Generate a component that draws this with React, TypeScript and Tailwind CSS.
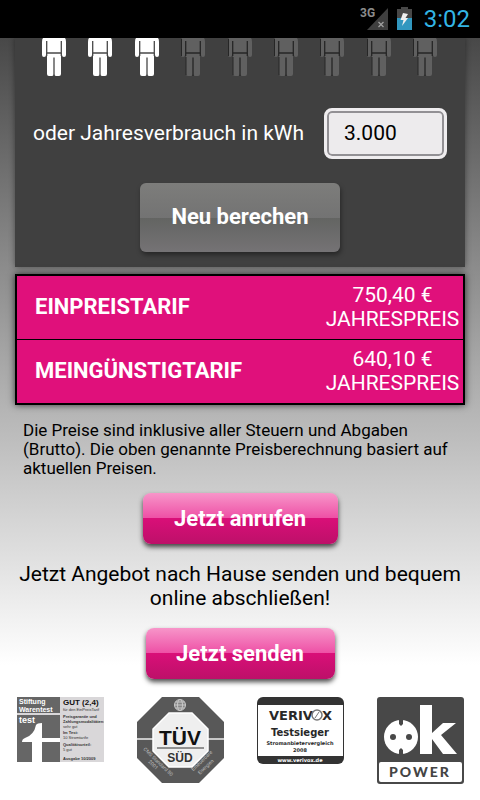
import React from "react";

function Person({ active }: { active: boolean }) {
  const fill = active ? "#ffffff" : "#606060";
  const line = active ? "#484848" : "#262626";
  return (
    <svg width="24" height="39" viewBox="0 0 24 39" aria-hidden="true">
      <path d="M1 0H23Q24 1 24 4V17Q24 19 22 19Q20 19 20 17V15H4V17Q4 19 2 19Q0 19 0 17V4Q0 1 1 0Z" fill={fill} />
      <path d="M5 15H19V36Q19 38 17 38H14Q12.5 38 12 36Q11.500 38 10 38H7Q5 38 5 36Z" fill={fill} />
      <path d="M4.700 3V18M19.300 3V18M5 15H19M12 19.500V38" stroke={line} strokeWidth="1.300" fill="none" />
      {!active && <path d="M0.500 1V18M5 19V37" stroke={line} strokeWidth="1" fill="none" />}
    </svg>
  );
}

function StatusBar() {
  return (
    <header className="flex h-[38px] items-center justify-end bg-black pr-[10px]">
      <svg width="28" height="26" viewBox="0 0 28 26" className="mr-2" role="img" aria-label="3G">
        <path d="M7 24L28 2V24Z" fill="#3f3f3f" />
        <path d="M18.500 16L23.500 21M23.500 16L18.500 21" stroke="#a0a0a0" strokeWidth="1.300" />
        <text x="0" y="11" fontFamily="Roboto, sans-serif" fontSize="12" fontWeight="700" fill="#8c8c8c">3G</text>
      </svg>
      <svg width="18" height="26" viewBox="0 0 18 26" className="mr-[10px]" aria-hidden="true">
        <path d="M1 3H5V1H12V3H16V24H1Z" fill="#484848" />
        <path d="M1 12H16V24H1Z" fill="#3197bf" />
        <path d="M7 7L12 8L9.500 12H12L6 20L7.500 14H4.500Z" fill="#f0f0f0" />
      </svg>
      <span className="text-2xl leading-[38px] text-[#33b5e5]">3:02</span>
    </header>
  );
}

function PinkButton({ children, wide }: { children: string; wide?: boolean }) {
  return (
    <button
      type="button"
      className={`mx-auto block h-[51px] rounded-lg bg-[linear-gradient(#f795c9,#ee4fa5_50%,#d90f78_50%,#bd1069)] text-[22px] leading-6 font-bold text-white shadow-[0_3px_5px_rgba(0,0,0,0.7)] ${wide ? "w-[195px]" : "w-[189px]"}`}
    >
      {children}
    </button>
  );
}

function TariffRow({ name, price }: { name: string; price: string }) {
  return (
    <tr className="h-16 border-b border-black last:h-[65px] last:border-b-0">
      <th scope="row" className="pl-[18px] text-left text-[22px] leading-6 font-bold">{name}</th>
      <td className="w-[142px] text-center text-[21px] leading-6">
        {price}
        <br />
        JAHRESPREIS
      </td>
    </tr>
  );
}

const sans = "Roboto, Arial, sans-serif";

function StiftungLogo() {
  return (
    <svg width="87" height="65" viewBox="0 0 87 65" role="img" aria-label="Stiftung Warentest">
      <rect width="87" height="65" fill="#d9d7d9" />
      <rect width="43" height="16" fill="#666" />
      <rect y="18" width="43" height="47" fill="#666" />
      <g fontFamily="Liberation Sans, Arial, sans-serif" fontWeight="700" fill="#fff">
        <text x="2" y="7" fontSize="7">Stiftung</text>
        <text x="2" y="15" fontSize="7">Warentest</text>
        <text x="2" y="26" fontSize="9">test</text>
      </g>
      <path d="M5 45Q5 42 8 41Q17 38 19 28Q20 26 25 26V41H43V45H25V65H15V45Z" fill="#fff" />
      <g fontFamily="Liberation Sans, Arial, sans-serif" fill="#333">
        <text x="46" y="8" fontSize="8" fontWeight="700" fill="#111">GUT (2,4)</text>
        <text x="46" y="14" fontSize="4">für den EinPreisTarif</text>
        <text x="46" y="21" fontSize="4" fontWeight="700">Preisgarantie und</text>
        <text x="46" y="26" fontSize="4" fontWeight="700">Zahlungsmodalitäten:</text>
        <text x="46" y="31" fontSize="4">sehr gut</text>
        <text x="46" y="37" fontSize="4" fontWeight="700">Im Test:</text>
        <text x="46" y="42" fontSize="4">10 Stromtarife</text>
        <text x="46" y="49" fontSize="4" fontWeight="700">Qualitätsurteil:</text>
        <text x="46" y="54" fontSize="4">5 gut</text>
        <text x="46" y="63" fontSize="4" fontWeight="700">Ausgabe 10/2009</text>
      </g>
    </svg>
  );
}

function TuvLogo() {
  return (
    <svg width="87" height="87" viewBox="0 0 87 87" role="img" aria-label="TÜV SÜD">
      <path d="M25 0H62L87 25V61L62 86H25L0 61V25Z" fill="#585858" />
      <path d="M0 42H87" stroke="#eee" strokeWidth="1.500" />
      <path d="M32 16H55L71 32V54L55 70H32L16 54V32Z" fill="#efefef" stroke="#fff" strokeWidth="1.500" />
      <g fill="none" stroke="#c8c8c8" strokeWidth="1">
        <circle cx="43" cy="8" r="5.500" fill="#858585" />
        <ellipse cx="43" cy="8" rx="2.500" ry="5.500" />
        <path d="M37.500 8H48.500M38.500 5H47.500M38.500 11H47.500" />
      </g>
      <path d="M20 51H67" stroke="#333" strokeWidth="1" />
      <g fontFamily="Liberation Sans, Arial, sans-serif" fontWeight="700" textAnchor="middle" fill="#111">
        <text x="43" y="48" fontSize="21">TÜV</text>
        <text x="43" y="65" fontSize="12" fill="#333">SÜD</text>
      </g>
      <g fontFamily={sans} fontSize="5" fill="#bbb" textAnchor="middle">
        <text transform="translate(20 66) rotate(44)">CMS Standard 80</text>
        <text transform="translate(15 69) rotate(44)">2001</text>
        <text transform="translate(66 65) rotate(-44)">Erneuerbare</text>
        <text transform="translate(70 71) rotate(-44)">Energien</text>
      </g>
    </svg>
  );
}

function VerivoxLogo() {
  return (
    <svg width="87" height="67" viewBox="0 0 87 67" role="img" aria-label="Verivox Testsieger">
      <rect width="87" height="67" rx="6" fill="#333" />
      <rect x="1" y="8" width="85" height="51" fill="#fff" />
      <g fontFamily="DejaVu Sans, sans-serif" fontWeight="700" fill="#282828">
        <text x="12" y="23" fontSize="13">VERIV</text>
        <text x="65" y="23" fontSize="13">X</text>
        <g textAnchor="middle">
          <text x="43" y="39" fontSize="10">Testsieger</text>
          <text x="43" y="48" fontSize="5">Stromanbietervergleich</text>
          <text x="43" y="55" fontSize="5">2008</text>
          <text x="43" y="65" fontSize="5" fill="#fff">www.verivox.de</text>
        </g>
      </g>
      <circle cx="60" cy="18" r="5" fill="#fff" stroke="#777" strokeWidth="1.500" />
      <path d="M58 21L62 15" stroke="#777" />
    </svg>
  );
}

function OkPowerLogo() {
  return (
    <svg width="87" height="87" viewBox="0 0 87 87" role="img" aria-label="ok power">
      <rect width="87" height="87" rx="3" fill="#484848" />
      <rect x="2" y="65" width="83" height="20" rx="2" fill="#fff" />
      <circle cx="24" cy="40" r="17" fill="#fff" />
      <path d="M22 22H26V27L24 29L22 27ZM22 58H26V53L24 51L22 53Z" fill="#484848" />
      <circle cx="16" cy="40" r="3" fill="#484848" />
      <circle cx="32" cy="40" r="3" fill="#484848" />
      <path d="M43 8H55V36L66 26H79L64 38L80 57H66L55 42V57H43Z" fill="#fff" />
      <text x="43" y="80" textAnchor="middle" fontFamily="Lato, sans-serif" fontWeight="900" fontSize="14" letterSpacing="2" fill="#444">POWER</text>
    </svg>
  );
}

const people = [true, true, true, false, false, false, false, false, false];

export default function App() {
  return (
    <div className="min-h-screen bg-[linear-gradient(#414141,#484848_38px,#8b8b8b_265px,#b2b2b2_400px,#ffffff_665px)] font-[Roboto,Arial,sans-serif] text-black">
      <StatusBar />
      <main className="px-[15px]">
        <form className="h-[229px] bg-[#404040] px-[18px] text-white shadow-[0_0_6px_rgba(0,0,0,0.45)]" onSubmit={(e) => e.preventDefault()}>
          <div className="flex justify-between pr-[10px] pl-[9px]">
            {people.map((active, i) => (
              <Person key={i} active={active} />
            ))}
          </div>
          <div className="mt-[31px] flex items-center justify-between">
            <label htmlFor="kwh" className="pb-0.5 text-[21px] leading-6 whitespace-nowrap">oder Jahresverbrauch in kWh</label>
            <input
              id="kwh"
              defaultValue="3.000"
              className="h-[51px] w-[123px] rounded-lg border-[3px] border-[#efedef] bg-[#edebed] pb-0.5 pl-[17px] text-[21px] text-black shadow-[inset_0_0_0_2px_#929094]"
            />
          </div>
          <button
            type="button"
            className="mx-auto mt-6 block h-[69px] w-[200px] rounded-md bg-[linear-gradient(#7d7d7b,#737373_50%,#636462_50%,#757375)] pb-0.5 text-[22px] leading-6 font-bold shadow-[1px_3px_5px_rgba(0,0,0,0.4)]"
          >
            Neu berechen
          </button>
        </form>

        <table className="mt-[7px] w-full border-collapse border-2 border-black bg-[#e0107b] text-white shadow-[0_0_7px_rgba(0,0,0,0.7)]">
          <tbody>
            <TariffRow name="EINPREISTARIF" price="750,40 €" />
            <TariffRow name="MEINGÜNSTIGTARIF" price="640,10 €" />
          </tbody>
        </table>

        <p className="mx-2 mb-[15px] pt-4 text-[17px] leading-[19px]">
          Die Preise sind inklusive aller Steuern und Abgaben (Brutto). Die oben genannte Preisberechnung basiert auf aktuellen Preisen.
        </p>
        <PinkButton wide>Jetzt anrufen</PinkButton>
        <p className="-mx-2 my-[18px] text-center text-[21px] leading-6">
          Jetzt Angebot nach Hause senden und bequem online abschließen!
        </p>
        <PinkButton>Jetzt senden</PinkButton>
        <footer className="mt-[18px] flex items-start justify-between pr-px pl-0.5">
          <StiftungLogo />
          <TuvLogo />
          <VerivoxLogo />
          <OkPowerLogo />
        </footer>
      </main>
    </div>
  );
}
